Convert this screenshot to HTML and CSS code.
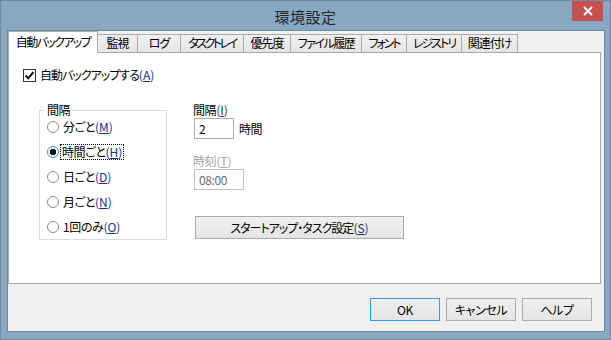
FILE: index.html
```html
<!DOCTYPE html>
<html lang="ja">
<head>
<meta charset="utf-8">
<title>環境設定</title>
<link rel="stylesheet" href="styles.css">
</head>
<body>
<div class="window">
  <div class="titlebar">
    <span class="title">環境設定</span>
    <div class="close">
      <svg width="10" height="10" viewBox="0 0 10 10"><path d="M1 1 L9 9 M9 1 L1 9" stroke="#fff" stroke-width="2" fill="none"/></svg>
    </div>
  </div>
  <div class="client">
    <div class="tabs">
      <div class="tab active t-backup">自動バックアップ</div>
      <div class="tab t-watch">監視</div>
      <div class="tab t-log">ログ</div>
      <div class="tab t-tray">タスクトレイ</div>
      <div class="tab t-prio">優先度</div>
      <div class="tab t-hist">ファイル履歴</div>
      <div class="tab t-font">フォント</div>
      <div class="tab t-reg">レジストリ</div>
      <div class="tab t-assoc">関連付け</div>
    </div>
    <div class="panel">
      <div class="check-row">
        <span class="checkbox"><svg width="11" height="11" viewBox="0 0 11 11"><path d="M1.5 5.5 L4.2 8.3 L9.5 2" stroke="#111" stroke-width="2" fill="none"/></svg></span>
        <span class="tight">自動バックアップする<span class="key">(<u>A</u>)</span></span>
      </div>
      <div class="main-row">
        <fieldset class="group">
          <legend>間隔</legend>
          <div class="radio-row"><span class="radio"></span><span>分ごと<span class="key">(<u>M</u>)</span></span></div>
          <div class="radio-row"><span class="radio checked"></span><span class="focus">時間ごと<span class="key">(<u>H</u>)</span></span></div>
          <div class="radio-row"><span class="radio"></span><span>日ごと<span class="key">(<u>D</u>)</span></span></div>
          <div class="radio-row"><span class="radio"></span><span>月ごと<span class="key">(<u>N</u>)</span></span></div>
          <div class="radio-row"><span class="radio"></span><span>1回のみ<span class="key">(<u>O</u>)</span></span></div>
        </fieldset>
        <div class="settings">
          <div class="label">間隔<span class="key">(<u>I</u>)</span></div>
          <div class="input-row">
            <div class="input">2</div>
            <span class="unit">時間</span>
          </div>
          <div class="label disabled">時刻<span class="key">(<u>T</u>)</span></div>
          <div class="input time disabled">08:00</div>
          <div class="btn task-btn">スタートアップ・タスク設定<span class="key">(<u>S</u>)</span></div>
        </div>
      </div>
    </div>
    <div class="footer">
      <div class="btn dlg default">OK</div>
      <div class="btn dlg">キャンセル</div>
      <div class="btn dlg">ヘルプ</div>
    </div>
  </div>
</div>
</body>
</html>
```
FILE: styles.css
```css
* { box-sizing: border-box; }
html, body {
  margin: 0;
  padding: 0;
  width: 611px;
  height: 340px;
  overflow: hidden;
}
body {
  font-family: "Noto Sans CJK JP", "Noto Sans", sans-serif;
  font-feature-settings: "palt";
  font-size: 12px;
  letter-spacing: -0.4px;
  color: #000;
}
.window {
  width: 611px;
  height: 340px;
  background: #87a8c2;
  border: 1px solid #6f8ca4;
  padding: 29px 5px 7px 6px;
  display: flex;
  flex-direction: column;
  position: relative;
}
.titlebar {
  position: absolute;
  top: 0;
  left: 0;
  right: 0;
  height: 30px;
  display: flex;
  align-items: center;
  justify-content: center;
}
.title {
  font-size: 15px;
  color: #262626;
  letter-spacing: 0.5px;
  line-height: 18px;
  margin-top: 1px;
}
.close {
  position: absolute;
  top: 0;
  right: 7px;
  width: 31px;
  height: 20px;
  background: #c75050;
  display: flex;
  align-items: center;
  justify-content: center;
}
.client {
  flex: 1;
  background: #f0f0f0;
  border: 1px solid #6d8aa2;
  display: flex;
  flex-direction: column;
}
.tabs {
  height: 21px;
  display: flex;
  align-items: flex-end;
  position: relative;
  z-index: 1;
}
.tab {
  height: 18px;
  line-height: 16px;
  padding: 0;
  text-align: center;
  letter-spacing: -1px;
  border-top: 1px solid #acacac;
  border-right: 1px solid #acacac;
  background: linear-gradient(#f0f0f0, #e5e5e5);
  white-space: nowrap;
  flex: none;
}
.tab.active {
  height: 22px;
  margin-bottom: -1px;
  line-height: 20px;
  background: #fff;
  border-left: 1px solid #acacac;
}
.t-backup { width: 90px; letter-spacing: -1.6px; }
.t-watch { width: 40px; }
.t-log { width: 43px; }
.t-tray { width: 63px; letter-spacing: -2.5px; }
.t-prio { width: 47px; }
.t-hist { width: 71px; letter-spacing: -1.5px; }
.t-font { width: 45px; letter-spacing: -2px; }
.t-reg { width: 55px; letter-spacing: -2px; }
.t-assoc { width: 56px; }
.panel {
  height: 232px;
  margin-right: 3px;
  background: #fff;
  border: 1px solid #a9a9a9;
  padding: 15px 0 0 14px;
}
.check-row {
  display: flex;
  align-items: center;
  height: 14px;
  line-height: 14px;
}
.tight { letter-spacing: -1px; }
.checkbox {
  width: 13px;
  height: 13px;
  border: 1px solid #333;
  background: #fff;
  margin-right: 4px;
  display: flex;
  align-items: center;
  justify-content: center;
}
.key { color: #1a3282; letter-spacing: 0; }
.key u { text-underline-offset: 1px; }
.main-row {
  display: flex;
  margin-top: 21px;
}
.group {
  margin: 0 0 0 16px;
  width: 128px;
  min-width: 0;
  border: 1px solid #dcdcdc;
  padding: 0 0 2px 7px;
  display: flex;
  flex-direction: column;
  gap: 5px;
}
.group legend {
  padding: 0 2px;
  margin-left: -2px;
  line-height: 14px;
  height: 14px;
}
.radio-row {
  height: 20px;
  display: flex;
  align-items: center;
  line-height: 14px;
  white-space: nowrap;
}
.radio {
  width: 12px;
  height: 12px;
  border: 1px solid #8a8a8a;
  border-radius: 50%;
  background: #fff;
  margin-right: 4px;
  flex: none;
}
.radio.checked {
  border-color: #3c8ee8;
  background: radial-gradient(circle, #111 0 3px, #fff 3.5px);
}
.focus {
  outline: 1px dotted #000;
  outline-offset: 0;
  padding: 0 1px;
  margin-left: -2px;
}
.settings {
  margin-left: 26px;
  display: flex;
  flex-direction: column;
  align-items: flex-start;
}
.label {
  line-height: 14px;
  height: 14px;
}
.label.disabled {
  color: #a0a0a0;
  margin-top: 15px;
}
.label.disabled .key { color: #9aa6c6; }
.input-row {
  display: flex;
  align-items: center;
  margin-top: 1px;
}
.input {
  width: 40px;
  height: 21px;
  border: 1px solid #abadb3;
  background: #fff;
  padding-left: 4px;
  line-height: 19px;
  margin-left: 1px;
}
.unit {
  margin-left: 5px;
  line-height: 14px;
}
.input.time {
  width: 50px;
  margin-top: 1px;
  border-color: #c0c0c0;
  color: #6d6d6d;
}
.btn {
  height: 23px;
  border: 1px solid #acacac;
  background: linear-gradient(#f0f0f0, #e5e5e5);
  display: flex;
  align-items: center;
  justify-content: center;
  line-height: 14px;
  white-space: nowrap;
}
.task-btn {
  width: 209px;
  margin-top: 26px;
  margin-left: 2px;
  letter-spacing: -1px;
}
.footer {
  display: flex;
  justify-content: flex-end;
  gap: 6px;
  padding: 14px 12px 0 0;
}
.btn.dlg { width: 70px; }
.btn.default { border-color: #3399ff; }
```
